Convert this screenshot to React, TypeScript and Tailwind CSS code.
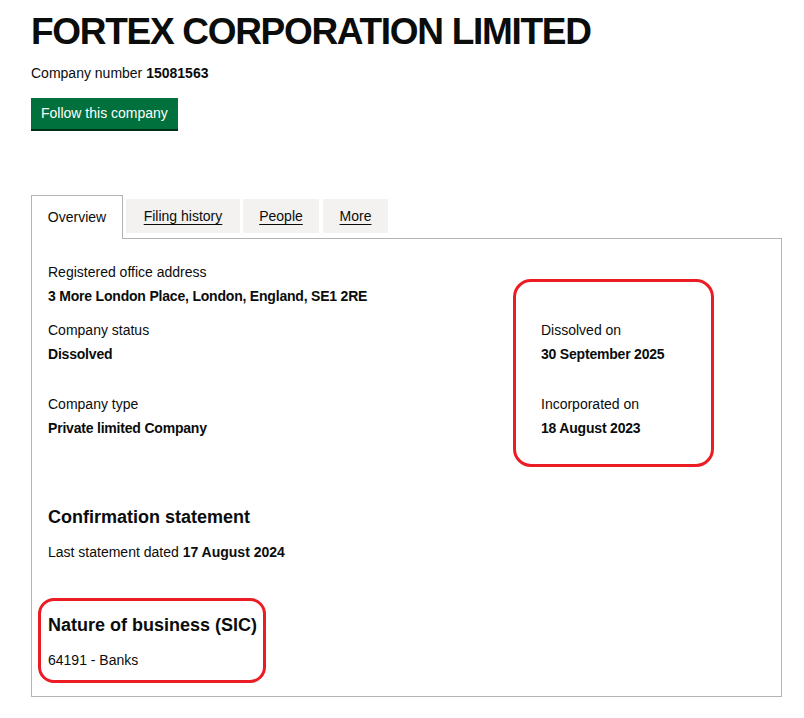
import React from "react";

const font = { fontFamily: '"Liberation Sans", Arial, sans-serif' };

function Field({ label, value }: { label: string; value: string }) {
  return (
    <div>
      <div className="text-[14px] leading-[20px] text-[#0b0c0c]">{label}</div>
      <div className="mt-[4px] text-[14px] leading-[20px] font-bold tracking-[-0.2px] text-[#0b0c0c]">{value}</div>
    </div>
  );
}

export default function App() {
  return (
    <div className="min-h-[718px] w-[804px] bg-white text-[#0b0c0c]" style={font}>
      <div className="px-[31px] pt-[12px]">
        <h1 className="text-[37px] leading-[40px] font-bold tracking-[-1.3px]">FORTEX CORPORATION LIMITED</h1>
        <p className="mt-[11px] text-[14px] leading-[20px]">
          Company number <span className="font-bold">15081563</span>
        </p>
        <button className="mt-[15px] h-[31px] bg-[#00703c] px-[10px] text-[14px] text-white shadow-[0_2px_0_#002d18]">
          Follow this company
        </button>

        {/* tabs */}
        <div className="mt-[66px] flex items-end">
          <div className="relative z-10 -mb-px flex h-[44px] w-[92px] items-center justify-center border border-b-0 border-[#b1b4b6] bg-white text-[14px]">
            Overview
          </div>
          <div className="mb-[5px] ml-[3px] flex h-[34px] w-[114px] items-center justify-center bg-[#f3f2f1] text-[14px] underline underline-offset-[3px]">
            Filing history
          </div>
          <div className="mb-[5px] ml-[3px] flex h-[34px] w-[76px] items-center justify-center bg-[#f3f2f1] text-[14px] underline underline-offset-[3px]">
            People
          </div>
          <div className="mb-[5px] ml-[4px] flex h-[34px] w-[65px] items-center justify-center bg-[#f3f2f1] text-[14px] underline underline-offset-[3px]">
            More
          </div>
        </div>

        {/* panel */}
        <div className="relative h-[459px] w-[751px] border border-[#b1b4b6] px-[16px] pt-[23px]">
          <Field label="Registered office address" value="3 More London Place, London, England, SE1 2RE" />
          <div className="mt-[14px] grid grid-cols-[493px_1fr]">
            <div className="flex flex-col gap-[30px]">
              <Field label="Company status" value="Dissolved" />
              <Field label="Company type" value="Private limited Company" />
            </div>
            <div className="flex flex-col gap-[30px]">
              <Field label="Dissolved on" value="30 September 2025" />
              <Field label="Incorporated on" value="18 August 2023" />
            </div>
          </div>

          <h2 className="mt-[67px] text-[18px] leading-[24px] font-bold">Confirmation statement</h2>
          <p className="mt-[13px] text-[14px] leading-[20px]">
            Last statement dated <span className="font-bold">17 August 2024</span>
          </p>

          <h2 className="mt-[51px] text-[18px] leading-[24px] font-bold">Nature of business (SIC)</h2>
          <p className="mt-[13px] text-[14px] leading-[20px]">64191 - Banks</p>

          {/* annotation boxes */}
          <div className="absolute left-[481px] top-[40px] h-[188px] w-[201px] rounded-[18px] border-[3px] border-[#ec1c24]" />
          <div className="absolute left-[6px] top-[359px] h-[85px] w-[228px] rounded-[16px] border-[3px] border-[#ec1c24]" />
        </div>
      </div>
    </div>
  );
}
